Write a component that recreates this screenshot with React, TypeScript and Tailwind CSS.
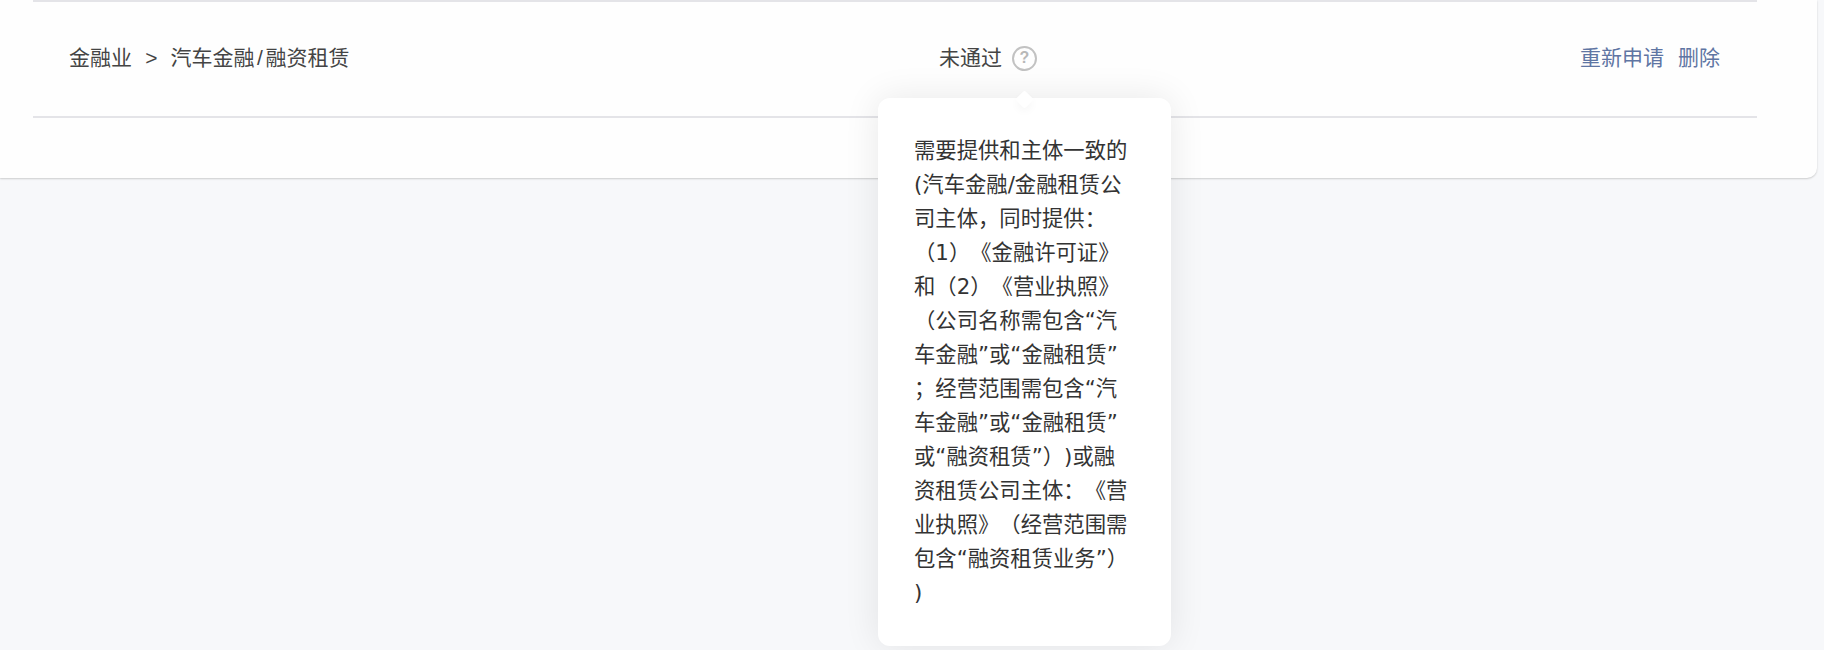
const tipLines = [
  '需要提供和主体一致的',
  '(汽车金融/金融租赁公',
  '司主体，同时提供：',
  '（1）《金融许可证》',
  '和（2）《营业执照》',
  '（公司名称需包含“汽',
  '车金融”或“金融租赁”',
  '；经营范围需包含“汽',
  '车金融”或“金融租赁”',
  '或“融资租赁”）)或融',
  '资租赁公司主体：《营',
  '业执照》（经营范围需',
  '包含“融资租赁业务”）',
  ')',
]

function HelpTip() {
  return (
    <div className="relative ml-[10px] flex h-[25px] w-[25px] items-center justify-center rounded-full border-2 border-[#c2c2c2] text-[16px] font-bold leading-none text-[#b8b8b8]">
      ?
      <div className="absolute left-[-136px] top-[42px] z-10 w-[293px] font-normal">
        <div className="relative mt-[8px] h-[548px] rounded-[12px] bg-white px-[36px] pt-[36px] font-['DejaVu_Sans','Noto_Sans_CJK_SC',sans-serif] text-[21.33px] leading-[34px] text-[#333] shadow-[0_0_36px_rgba(0,0,0,0.09)] [text-spacing-trim:space-all]">
          {tipLines.map((line, i) => (
            <div key={i} className="whitespace-nowrap">
              {line}
            </div>
          ))}
        </div>
        <div className="absolute left-[140px] top-[3px] h-[13px] w-[13px] rotate-45 rounded-[2px] bg-white shadow-[3px_3px_8px_rgba(0,0,0,0.035)]" />
      </div>
    </div>
  )
}

export default function App() {
  return (
    <div
      className="h-[650px] w-[1824px] overflow-hidden bg-[#f7f8fa] text-[21px] text-[#444]"
      style={{ fontFamily: '"Liberation Sans", "Noto Sans CJK SC", sans-serif' }}
    >
      <div className="mr-[7px] h-[178px] rounded-br-[10px] bg-[#fefefe] pl-[33px] pr-[60px] shadow-[0_1px_2px_rgba(0,0,0,0.18)]">
        <div className="flex h-[118px] items-center border-y-2 border-[#e4e4e8] pb-[2px] pl-[36px] pr-[37px]">
          <div className="w-[870px] whitespace-pre [word-spacing:0.75px]">
            金融业  &gt;  汽车金融<span className="mx-[2.5px]">/</span>融资租赁
          </div>
          <div className="flex flex-1 items-center">
            未通过
            <HelpTip />
          </div>
          <div className="flex gap-[14px] text-[#5f75a3]">
            <span>重新申请</span>
            <span>删除</span>
          </div>
        </div>
      </div>
    </div>
  )
}
